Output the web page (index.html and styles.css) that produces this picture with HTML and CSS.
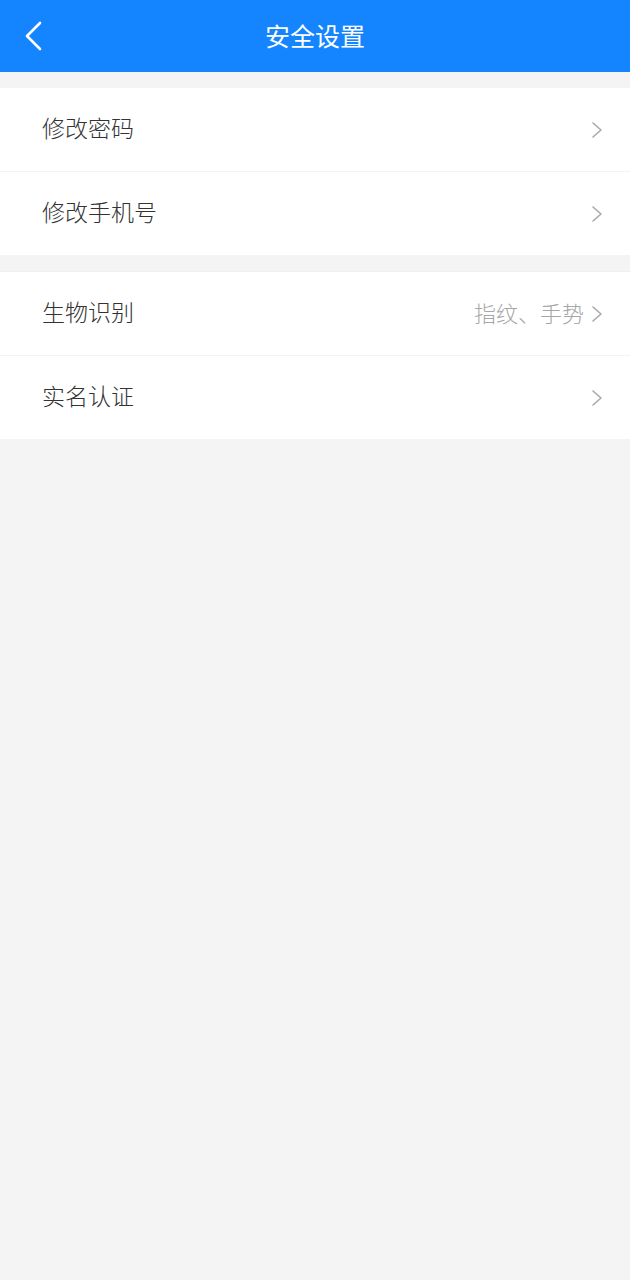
FILE: index.html
```html
<!DOCTYPE html>
<html lang="zh">
<head>
<meta charset="utf-8">
<title>安全设置</title>
<link rel="stylesheet" href="styles.css">
</head>
<body>
<header class="topbar">
  <span class="back">
    <svg width="20" height="30" viewBox="0 0 20 30"><path d="M16 2 L3 15 L16 28" fill="none" stroke="#fff" stroke-width="2.6" stroke-linecap="round" stroke-linejoin="round"/></svg>
  </span>
  <h1 class="title">安全设置</h1>
</header>
<main class="content">
  <section class="group">
    <div class="row"><span class="label">修改密码</span><span class="right"><svg class="chev" width="12" height="18" viewBox="0 0 12 18"><path d="M2 2 L10 9 L2 16" fill="none" stroke="#a8a8a8" stroke-width="1.6" stroke-linecap="round" stroke-linejoin="round"/></svg></span></div>
    <div class="row"><span class="label">修改手机号</span><span class="right"><svg class="chev" width="12" height="18" viewBox="0 0 12 18"><path d="M2 2 L10 9 L2 16" fill="none" stroke="#a8a8a8" stroke-width="1.6" stroke-linecap="round" stroke-linejoin="round"/></svg></span></div>
  </section>
  <section class="group">
    <div class="row"><span class="label">生物识别</span><span class="right"><span class="value">指纹、手势</span><svg class="chev" width="12" height="18" viewBox="0 0 12 18"><path d="M2 2 L10 9 L2 16" fill="none" stroke="#a8a8a8" stroke-width="1.6" stroke-linecap="round" stroke-linejoin="round"/></svg></span></div>
    <div class="row"><span class="label">实名认证</span><span class="right"><svg class="chev" width="12" height="18" viewBox="0 0 12 18"><path d="M2 2 L10 9 L2 16" fill="none" stroke="#a8a8a8" stroke-width="1.6" stroke-linecap="round" stroke-linejoin="round"/></svg></span></div>
  </section>
</main>
</body>
</html>
```
FILE: styles.css
```css
html, body {
  margin: 0;
  padding: 0;
  background: #f4f4f4;
  font-family: "Noto Sans CJK SC", "Noto Sans", sans-serif;
}
.topbar {
  height: 72px;
  background: #1485fe;
  display: flex;
  align-items: center;
  justify-content: center;
  position: relative;
}
.back {
  position: absolute;
  left: 24px;
  top: 21px;
  display: flex;
}
.title {
  margin: 0 0 2px;
  color: #fff;
  font-size: 25px;
  font-weight: 400;
  line-height: 1;
}
.content {
  padding-top: 16px;
  display: flex;
  flex-direction: column;
  gap: 16px;
}
.group {
  background: #fff;
  border-top: 1px solid #efefef;
}
.group:first-child {
  border-top: none;
}
.row {
  height: 83px;
  box-sizing: content-box;
  display: flex;
  align-items: center;
  justify-content: space-between;
  padding: 0 27px 0 42px;
}
.row + .row {
  border-top: 1px solid #f3f3f3;
}
.label {
  font-size: 23px;
  font-weight: 300;
  color: #333;
  margin-bottom: 5px;
}
.right {
  display: flex;
  align-items: center;
  gap: 7px;
}
.value {
  font-size: 22px;
  font-weight: 300;
  color: #a6a6a6;
  margin-bottom: 3px;
}
.chev {
  display: block;
}
```
